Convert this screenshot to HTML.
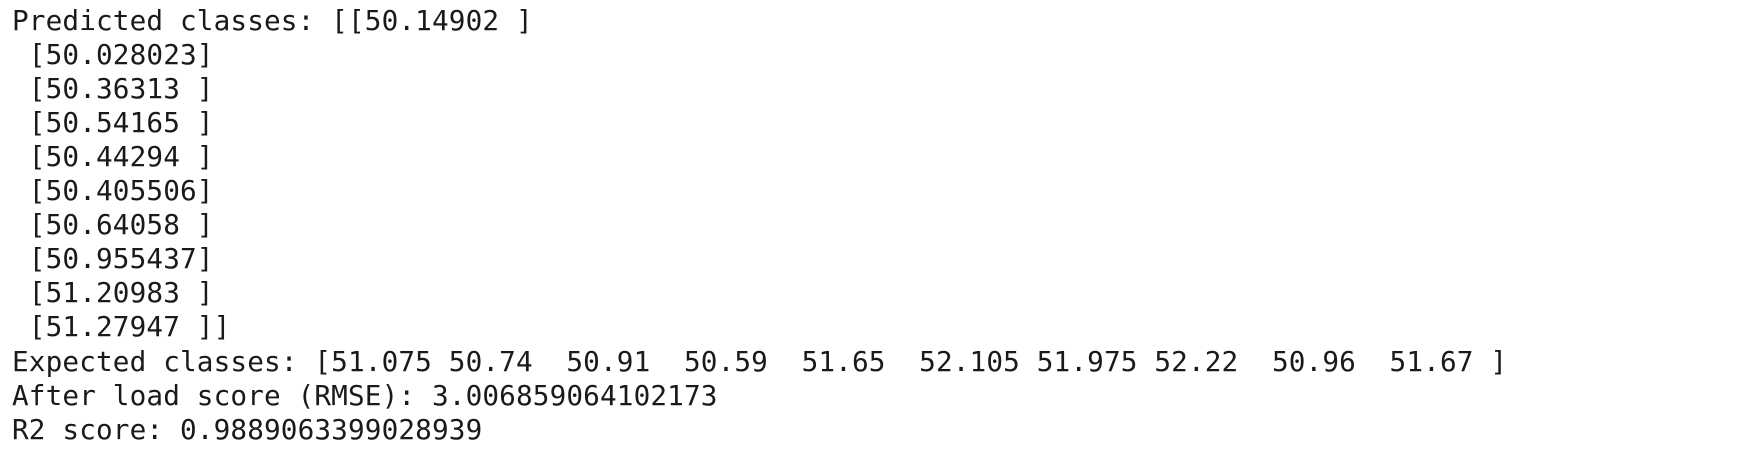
<!DOCTYPE html>
<html><head><meta charset="utf-8"><style>
html,body{margin:0;padding:0;background:#fff;width:1738px;height:458px;overflow:hidden}
pre{position:absolute;left:12px;top:-30.5px;margin:0;font-family:"DejaVu Sans Mono","Liberation Mono",monospace;font-size:27.7px;letter-spacing:0.13px;line-height:34.1px;color:#1a1a1a}
</style></head><body>
<pre>(10, 1)
Predicted classes: [[50.14902 ]
 [50.028023]
 [50.36313 ]
 [50.54165 ]
 [50.44294 ]
 [50.405506]
 [50.64058 ]
 [50.955437]
 [51.20983 ]
 [51.27947 ]]
Expected classes: [51.075 50.74  50.91  50.59  51.65  52.105 51.975 52.22  50.96  51.67 ]
After load score (RMSE): 3.006859064102173
R2 score: 0.9889063399028939</pre>
</body></html>
